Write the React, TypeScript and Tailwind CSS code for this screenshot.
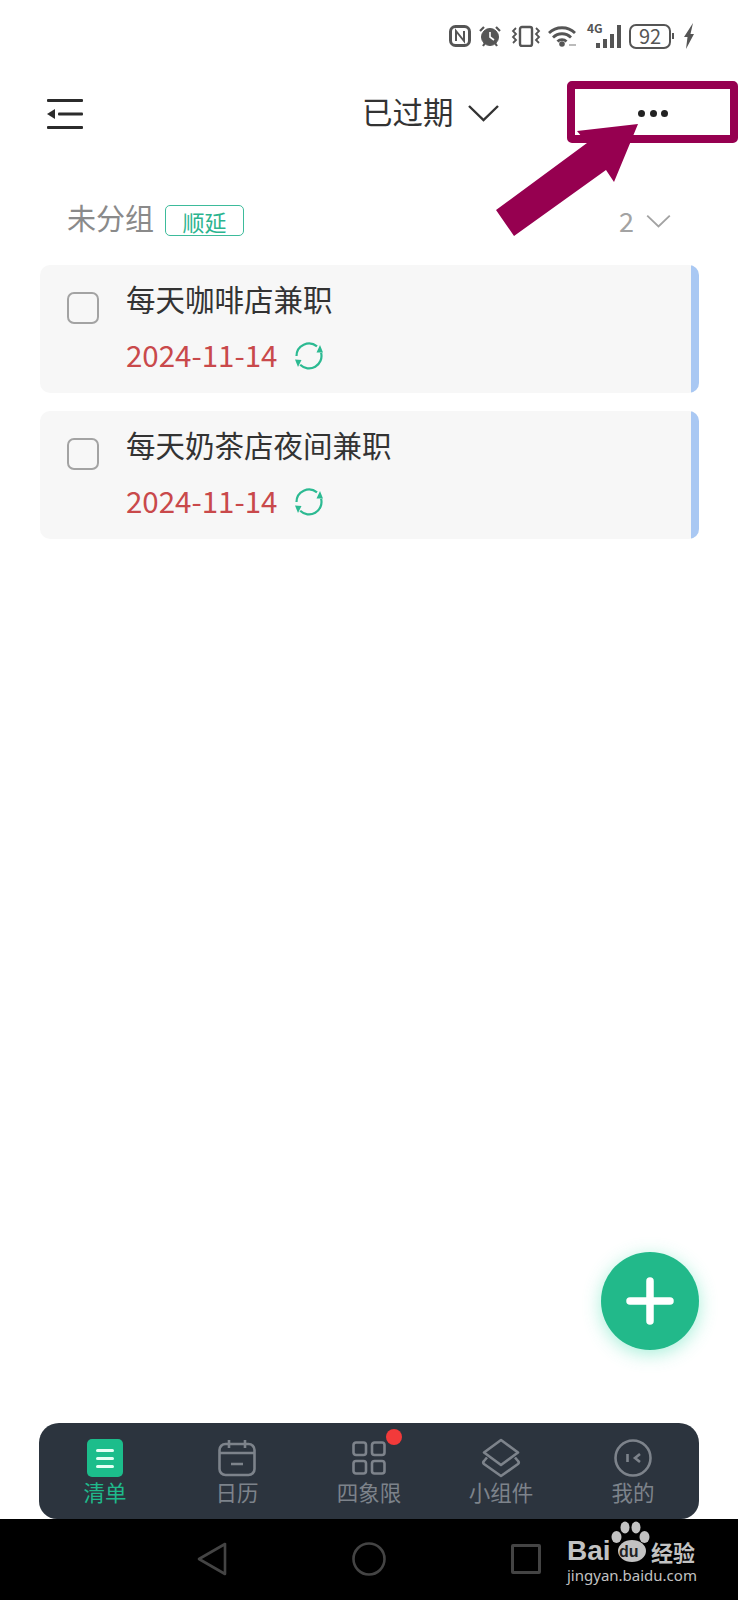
import { ReactNode } from "react";

const tasks = [
  { title: "每天咖啡店兼职", date: "2024-11-14" },
  { title: "每天奶茶店夜间兼职", date: "2024-11-14" },
];

function Chevron({ className }: { className: string }) {
  return (
    <svg viewBox="0 0 32 18" fill="none" stroke="currentColor" strokeWidth="2.4" className={className}>
      <path d="M1.5 2 16 16 30.5 2" />
    </svg>
  );
}

function StatusIcons() {
  return (
    <div className="h-[70px] flex items-center justify-end pr-[43px] text-[#555]">
      {/* nfc */}
      <svg viewBox="0 0 22 22" className="w-[22px] h-[22px] mt-[2px]" fill="none" stroke="currentColor">
        <rect x="1.5" y="1.5" width="19" height="19" rx="5" strokeWidth="3" />
        <path d="M7 16V6l8 10V6" strokeWidth="2" />
      </svg>
      {/* alarm */}
      <svg viewBox="0 0 22 22" className="w-[22px] h-[22px] ml-[8px] mt-[2px]" fill="none" stroke="currentColor">
        <circle cx="11" cy="12" r="8.5" fill="currentColor" />
        <path d="M11 7v5l4 3" stroke="#fff" strokeWidth="1.6" />
        <path d="M1 6l4-4M21 6l-4-4M4 21l2-3M18 21l-2-3" strokeWidth="2.2" />
      </svg>
      {/* vibrate */}
      <svg viewBox="0 0 30 22" className="w-[30px] h-[22px] ml-[10px] mt-[2px]" fill="none" stroke="currentColor" strokeWidth="2">
        <rect x="9" y="2" width="12" height="19" rx="2" strokeWidth="2.4" />
        <path d="M5 3 2 6l3 3-3 3 3 3-3 3M25 3l3 3-3 3 3 3-3 3 3 3" strokeWidth="1.8" />
      </svg>
      {/* wifi */}
      <svg viewBox="0 0 30 22" className="w-[30px] h-[22px] ml-[7px] mt-[2px]" fill="none" stroke="currentColor" strokeWidth="2.8">
        <path d="M1 8c7-7 19-7 26 0M5 12.5c5-5 13-5 18 0M9.5 16.5c2.500-2.500 6.500-2.500 9 0" />
        <circle cx="14" cy="19" r="2.800" fill="currentColor" stroke="none" />
        <path d="M21 20h7" strokeWidth="1.600" stroke="#aaa" />
      </svg>
      {/* signal */}
      <div className="relative w-[34px] h-[24px] ml-[9px] mt-[2px]">
        <span className="absolute left-0 top-[-3px] text-[12px] leading-[14px] font-semibold">4G</span>
        <div className="absolute inset-0 flex items-end justify-end gap-[3px]">
          <div className="w-[4px] h-[5px] bg-[#555]" />
          <div className="w-[4px] h-[9px] bg-[#555]" />
          <div className="w-[4px] h-[14px] bg-[#555]" />
          <div className="w-[4px] h-[23px] bg-[#555]" />
        </div>
      </div>
      {/* battery */}
      <div className="ml-[8px] w-[42px] h-[25px] mt-[2px] border-2 border-[#555] rounded-[7px] flex items-center justify-center text-[20px] leading-none">
        92
      </div>
      <div className="w-[2px] h-[6px] ml-[1px] mt-[2px] bg-[#555]" />
      <svg viewBox="0 0 12 26" className="w-[12px] h-[26px] ml-[9px] mt-[2px]" fill="currentColor">
        <path d="M10 0 1 14h3.500L3 26l8-15H7.500z" />
      </svg>
    </div>
  );
}

function Sync() {
  return (
    <svg viewBox="0 0 28 28" className="w-[28px] h-[28px] mt-[3px] text-[#2cba92]" fill="none" stroke="currentColor" strokeWidth="2.2">
      <path d="M1.500 14A12.500 12.500 0 0 1 22 4.400" />
      <path d="M26.100 10.800A12.500 12.500 0 0 1 5.200 22.800" />
      <path d="M25 3l3 7.500-6.500 0z" fill="currentColor" stroke="none" />
      <path d="M3 25 0 17.500l6.500 0.500z" fill="currentColor" stroke="none" />
    </svg>
  );
}

function TaskCard({ title, date }: { title: string; date: string }) {
  return (
    <div className="h-[128px] flex rounded-[10px] bg-[#f7f7f7] overflow-hidden">
      <div className="w-[27px] shrink-0" />
      <div className="w-[32px] h-[32px] mt-[27px] shrink-0 border-2 border-[#a3a3a3] rounded-[7px]" />
      <div className="ml-[27px] flex-1">
        <div className="mt-[13px] text-[29.500px] leading-[40px] text-[#333]">{title}</div>
        <div className="mt-[15px] flex items-center gap-[18px]">
          <span className="text-[29.500px] leading-[42px] text-[#c9494b]">{date}</span>
          <Sync />
        </div>
      </div>
      <div className="w-[8px] shrink-0 bg-[#a9c8f3]" />
    </div>
  );
}

function Tab({ label, icon, active }: { label: string; icon: ReactNode; active?: boolean }) {
  return (
    <div className="flex flex-col items-center pt-[15px]">
      <div className="relative h-[40px] flex items-center justify-center">{icon}</div>
      <div className={`-mt-[1px] text-[21.500px] leading-[30px] ${active ? "text-[#1fb98b]" : "text-[#7d838b]"}`}>
        {label}
      </div>
    </div>
  );
}

export default function App() {
  return (
    <div
      className="relative w-[738px] h-[1600px] flex flex-col bg-white overflow-hidden"
      style={{ fontFamily: '"Noto Sans CJK SC", "Noto Sans", sans-serif' }}
    >
      <StatusIcons />

      {/* header */}
      <div className="h-[86px] shrink-0 flex items-center relative">
        <svg viewBox="0 0 36 30" className="ml-[47px] mt-[1px] w-[36px] h-[30px] text-[#2b2b2b]" fill="currentColor">
          <rect x="0" y="0" width="36" height="3" rx="1" />
          <rect x="11" y="13.500" width="25" height="3" rx="1" />
          <rect x="0" y="27" width="36" height="3" rx="1" />
          <path d="M0 15l8-5v10z" />
        </svg>
        <div className="ml-[279px] -mt-[3px] text-[30.500px] leading-none text-[#333]">已过期</div>
        <Chevron className="ml-[13px] w-[33px] h-[18px] text-[#333]" />
        <div className="ml-auto mr-[70px] flex gap-[4.500px]">
          <div className="w-[7px] h-[7px] rounded-full bg-[#222]" />
          <div className="w-[7px] h-[7px] rounded-full bg-[#222]" />
          <div className="w-[7px] h-[7px] rounded-full bg-[#222]" />
        </div>
      </div>

      {/* group title */}
      <div className="h-[109px] shrink-0 pt-[20px] pl-[67px] pr-[67px] flex items-center">
        <div className="flex items-center h-[88px]">
          <span className="text-[29px] -mt-[7px] leading-none text-[#8a8a8a]">未分组</span>
          <span className="ml-[11px] w-[79px] h-[31px] flex items-center justify-center border border-[#3dbb9b] rounded-[5px] text-[22px] leading-none text-[#2cb48f]">
            顺延
          </span>
        </div>
        <div className="ml-auto flex items-center gap-[12px] text-[#a3a3a3]">
          <span className="text-[27px] leading-none">2</span>
          <Chevron className="w-[25px] h-[14px]" />
        </div>
      </div>

      {/* list */}
      <div className="shrink-0 ml-[40px] mr-[39px] flex flex-col gap-[18px]">
        {tasks.map((t) => (
          <TaskCard key={t.title} title={t.title} date={t.date} />
        ))}
      </div>

      <div className="flex-1 flex items-end justify-end pr-[39px] pb-[73px]">
        <div className="w-[98px] h-[98px] rounded-full bg-[#22b98a] shadow-[0_4px_18px_rgba(60,220,170,0.45)] flex items-center justify-center">
          <svg viewBox="0 0 48 48" className="w-[48px] h-[48px]" stroke="#fff" strokeWidth="7.500" strokeLinecap="round">
            <path d="M24 4v40M4 24h40" />
          </svg>
        </div>
      </div>

      {/* tab bar */}
      <div className="shrink-0 ml-[39px] mr-[39px] h-[96px] rounded-t-[20px] rounded-b-[18px] bg-[#2c343e] grid grid-cols-5">
        <Tab
          active
          label="清单"
          icon={
            <div className="w-[36px] h-[38px] rounded-[5px] bg-[#1cbd8b] flex flex-col items-center justify-center gap-[5px]">
              <div className="w-[18px] h-[3px] rounded-full bg-[#e4fff4]" />
              <div className="w-[18px] h-[3px] rounded-full bg-[#e4fff4]" />
              <div className="w-[18px] h-[3px] rounded-full bg-[#e4fff4]" />
            </div>
          }
        />
        <Tab
          label="日历"
          icon={
            <svg viewBox="0 0 38 38" className="w-[38px] h-[38px] text-[#7d838b]" fill="none" stroke="currentColor" strokeWidth="2.600">
              <rect x="1.500" y="5" width="35" height="31" rx="6" />
              <path d="M1.500 14h35M11 1v8M27 1v8M13 25h12" />
            </svg>
          }
        />
        <Tab
          label="四象限"
          icon={
            <>
              <svg viewBox="0 0 34 34" className="w-[34px] h-[34px] text-[#7d838b]" fill="none" stroke="currentColor" strokeWidth="2.600">
                <rect x="1.500" y="1.500" width="12.500" height="12.500" rx="2.500" />
                <rect x="20" y="1.500" width="12.500" height="12.500" rx="2.500" />
                <rect x="1.500" y="20" width="12.500" height="12.500" rx="2.500" />
                <rect x="20" y="20" width="12.500" height="12.500" rx="2.500" />
              </svg>
              <div className="absolute right-[-16px] top-[-9px] w-[16px] h-[16px] rounded-full bg-[#f23a3a]" />
            </>
          }
        />
        <Tab
          label="小组件"
          icon={
            <svg viewBox="0 0 40 40" className="w-[40px] h-[40px] text-[#7d838b]" fill="none" stroke="currentColor" strokeWidth="2.600" strokeLinejoin="round">
              <path d="M20 2 37 14.500 20 27 3 14.500z" />
              <path d="M6 19.500 3 23c-1 1-1 2 0 3l17 12 17-12c1-1 1-2 0-3l-3-3.500" />
            </svg>
          }
        />
        <Tab
          label="我的"
          icon={
            <svg viewBox="0 0 38 38" className="w-[38px] h-[38px] text-[#7d838b]" fill="none" stroke="currentColor" strokeWidth="2.600">
              <circle cx="19" cy="19" r="17.500" />
              <path d="M13.500 15v8M26 15l-5 4 5 4" />
            </svg>
          }
        />
      </div>

      {/* system nav */}
      <div className="shrink-0 h-[81px] bg-black flex items-center pl-[197px] pb-[2px]">
        <svg viewBox="0 0 30 34" className="w-[30px] h-[34px]" fill="none" stroke="#444" strokeWidth="2.600" strokeLinejoin="round">
          <path d="M28 2v30L2 17z" />
        </svg>
        <svg viewBox="0 0 34 34" className="ml-[125px] w-[34px] h-[34px]" fill="none" stroke="#444" strokeWidth="2.600">
          <circle cx="17" cy="17" r="15.500" />
        </svg>
        <div className="ml-[125px] w-[30px] h-[30px] border-[3px] border-[#444] rounded-[2px]" />
      </div>

      {/* annotation drawn on top of the screenshot */}
      <div className="absolute left-[567px] top-[81px] w-[171px] h-[62px] border-[8px] border-[#960050] rounded-[5px]" />
      <svg viewBox="0 0 160 120" className="absolute left-[490px] top-[120px] w-[160px] h-[120px]" fill="#960050">
        <path d="M6 90 24 116 116 50 124 62 148 4 87 11 97 23z" />
      </svg>

      {/* baidu watermark */}
      <div className="absolute left-[567px] top-[1521px] w-[131px] h-[64px] text-[#c2c2c2]">
        <span className="absolute left-0 top-[15px] text-[28px] leading-[30px] font-bold" style={{ fontFamily: '"Liberation Sans", sans-serif' }}>
          Bai
        </span>
        <svg viewBox="0 0 40 42" className="absolute left-[44px] top-0 w-[40px] h-[42px]" fill="currentColor">
          <ellipse cx="5.500" cy="16" rx="5" ry="6" />
          <ellipse cx="14" cy="6.500" rx="4.500" ry="6" />
          <ellipse cx="25" cy="6.500" rx="4.500" ry="6" />
          <ellipse cx="33.500" cy="16" rx="5" ry="6" />
          <ellipse cx="21" cy="30" rx="14" ry="11" />
        </svg>
        <span className="absolute left-[52px] top-[22px] text-[16px] leading-[18px] font-bold text-[#222]" style={{ fontFamily: '"Liberation Sans", sans-serif' }}>
          du
        </span>
        <span className="absolute left-[84px] top-[18px] text-[22px] leading-[24px] font-bold whitespace-nowrap">经验</span>
        <span className="absolute left-0 top-[44px] text-[15px] leading-[20px] whitespace-nowrap" style={{ fontFamily: '"Noto Sans", sans-serif' }}>
          jingyan.baidu.com
        </span>
      </div>
    </div>
  );
}
